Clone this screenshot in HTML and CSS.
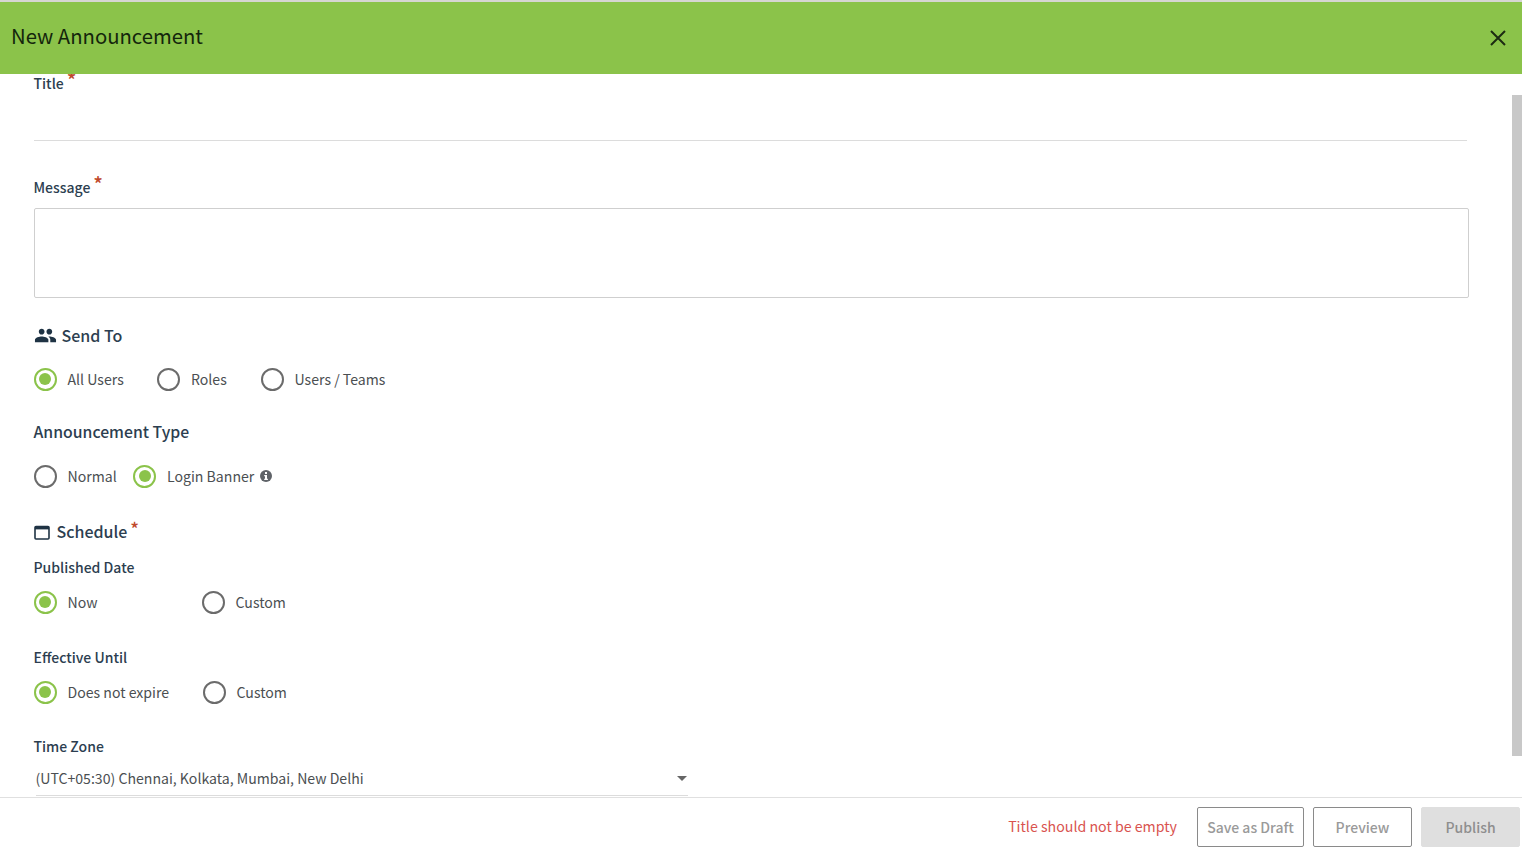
FILE: index.html
```html
<!DOCTYPE html>
<html lang="en">
<head>
<meta charset="utf-8">
<title>New Announcement</title>
<link rel="stylesheet" href="styles.css">
</head>
<body>
<div class="dialog">
  <header class="head">
    <h1 class="head-title">New Announcement</h1>
    <button class="close" aria-label="Close">
      <svg viewBox="0 0 16 16" width="16" height="16"><path d="M1 1L15 15M15 1L1 15" fill="none" stroke="#1c2b12" stroke-width="2"/></svg>
    </button>
  </header>
  <main class="body">
    <form class="form">
      <div class="label title-label">Title<span class="req">*</span></div>
      <div class="title-input"></div>
      <div class="label message-label">Message<span class="req">*</span></div>
      <div class="textarea"></div>

      <div class="section send-head">
        <svg class="ico-people" viewBox="0 0 24 24" width="24" height="24"><path fill="#1f3344" d="M16 11c1.66 0 2.99-1.34 2.99-3S17.66 5 16 5s-3 1.34-3 3 1.34 3 3 3zm-8 0c1.66 0 2.99-1.34 2.99-3S9.66 5 8 5 5 6.34 5 8s1.34 3 3 3zm0 2c-2.33 0-7 1.17-7 3.5V19h14v-2.5C15 14.17 10.33 13 8 13zm8 0c-.29 0-.62.02-.97.05 1.16.84 1.97 1.97 1.97 3.45V19h6v-2.5c0-2.33-4.67-3.5-7-3.5z"/></svg>
        <span>Send To</span>
      </div>
      <div class="radios send-radios">
        <label class="radio w-send1"><i class="dot on"></i>All Users</label>
        <label class="radio w-send2"><i class="dot"></i>Roles</label>
        <label class="radio"><i class="dot"></i>Users / Teams</label>
      </div>

      <div class="section type-head">Announcement Type</div>
      <div class="radios type-radios">
        <label class="radio w-type"><i class="dot"></i>Normal</label>
        <label class="radio"><i class="dot on"></i>Login Banner
          <svg class="ico-info" viewBox="0 0 12 12" width="12" height="12"><circle cx="6" cy="6" r="6" fill="#5f6368"/><rect x="5" y="2" width="2" height="2" fill="#fff"/><path d="M4.2 5h2.8v3.8h.9V10H4.2V8.8H5V6.2h-.8z" fill="#fff"/></svg>
        </label>
      </div>

      <div class="section sched-head">
        <svg class="ico-cal" viewBox="0 0 16 16" width="16" height="16"><rect x="1" y="2.5" width="14" height="12.5" rx="1" fill="none" stroke="#1f3344" stroke-width="1.6"/><rect x="1" y="2" width="14" height="3.4" fill="#1f3344"/></svg>
        <span>Schedule</span><span class="req req-big">*</span>
      </div>

      <div class="label pub-label">Published Date</div>
      <div class="radios pub-radios">
        <label class="radio w-pub"><i class="dot on"></i>Now</label>
        <label class="radio"><i class="dot"></i>Custom</label>
      </div>

      <div class="label eff-label">Effective Until</div>
      <div class="radios eff-radios">
        <label class="radio w-eff"><i class="dot on"></i>Does not expire</label>
        <label class="radio"><i class="dot"></i>Custom</label>
      </div>

      <div class="label tz-label">Time Zone</div>
      <div class="select">
        <span>(UTC+05:30) Chennai, Kolkata, Mumbai, New Delhi</span>
        <i class="caret"></i>
      </div>
    </form>
    <div class="scrollbar"><div class="thumb"></div></div>
  </main>
  <footer class="foot">
    <span class="error">Title should not be empty</span>
    <button class="btn btn-draft">Save as Draft</button>
    <button class="btn btn-preview">Preview</button>
    <button class="btn btn-publish">Publish</button>
  </footer>
</div>
</body>
</html>
```

FILE: styles.css
```css
* { box-sizing: border-box; }
html, body { margin: 0; height: 100%; overflow: hidden; background: #fff; }
body { font-family: "Noto Sans CJK SC", "Noto Sans", sans-serif; color: #2f3f4f; }
.dialog { display: flex; flex-direction: column; height: 850px; }

.head { flex: 0 0 74px; display: flex; align-items: center; justify-content: space-between; background: #8bc34a; border-top: 2px solid #d6d6d2; padding: 0 16px 6px 11px; }
.close { margin-top: 6px; }
.head-title { margin: 0; font-size: 20.3px; line-height: 30px; font-weight: 400; color: #14260c; }
.close { border: 0; background: none; padding: 0; width: 16px; height: 16px; display: block; }
.close svg { display: block; }

.body { flex: 1; display: flex; min-height: 0; overflow: hidden; }
.form { flex: 1; min-width: 0; padding-left: 33.5px; padding-right: 43px; }

.label { font-size: 14px; line-height: 20px; font-weight: 500; color: #2c3e50; }
.title-label, .message-label { line-height: 18px; padding-bottom: 2px; }
.req { color: #c0492b; font-size: 20px; line-height: 0; position: relative; top: -1px; margin-left: 3px; }
.title-input { height: 47px; border-bottom: 1px solid #dcdcdc; margin-right: 2px; }
.message-label { margin-top: 37px; }
.textarea { height: 90px; margin-top: 10px; border: 1px solid #cfcfcf; border-radius: 2px; }

.section { font-size: 16px; line-height: 24px; font-weight: 500; color: #2c3e50; display: flex; align-items: center; }
.send-head { margin-top: 25px; }
.ico-people { margin-right: 5px; width: 23px; height: 23px; }
.ico-cal { margin: 1px 7px 0 0; }
.req-big { margin-left: 3px; top: -3px; font-size: 18px; }

.radios { display: flex; align-items: center; font-size: 14.1px; color: #4b4f52; height: 24px; }
.radio { display: flex; align-items: center; line-height: 24px; }
.dot { width: 23px; height: 23px; border: 2px solid #6b6b6b; border-radius: 50%; margin-right: 11px; position: relative; flex: none; }
.dot.on { border-color: #8bc34a; }
.dot.on::after { content: ""; position: absolute; left: 3.5px; top: 3.5px; width: 12px; height: 12px; border-radius: 50%; background: #8bc34a; }

.send-radios { margin-top: 20px; }
.w-send1 { width: 123.5px; }
.w-send2 { width: 103.5px; }
.type-head { margin-top: 29px; font-size: 15.8px; }
.type-radios { margin-top: 20px; }
.w-type { width: 99.5px; }
.ico-info { margin-left: 6px; margin-top: 0; }
.sched-head { margin-top: 31px; }
.pub-label { margin-top: 14px; }
.pub-radios { margin-top: 13px; }
.w-pub { width: 168px; }
.eff-label { margin-top: 33px; }
.eff-radios { margin-top: 13px; }
.w-eff { width: 169px; }
.tz-label { margin-top: 32px; }
.select { width: 652px; height: 32px; margin: 8px 0 0 2px; padding: 0 1px 4px 0; border-bottom: 1px solid #dcdcdc; display: flex; align-items: center; justify-content: space-between; font-size: 14.1px; color: #4b4f52; }
.caret { width: 0; height: 0; margin-top: 2px; border-left: 5px solid transparent; border-right: 5px solid transparent; border-top: 5px solid #666; }

.scrollbar { flex: 0 0 10px; padding-top: 21px; padding-bottom: 41px; }
.thumb { height: 100%; background: #c8c8c8; }

.foot { flex: 0 0 53px; border-top: 1px solid #e0e0e0; display: flex; align-items: flex-start; justify-content: flex-end; padding: 9px 2px 0 0; }
.error { font-size: 14.2px; line-height: 40px; height: 40px; color: #d9534f; margin-right: 20px; margin-top: -1px; }
.btn { font-family: inherit; font-size: 14px; height: 40px; line-height: 38px; padding: 0; border-radius: 2px; background: #fff; border: 1px solid #8a8a8a; color: #9a9a9a; font-weight: 500; margin-left: 9px; }
.btn-draft { width: 107px; margin-left: 0; }
.btn-preview { width: 99px; }
.btn-publish { width: 99px; background: #dfdfdf; border-color: #dfdfdf; color: #8e8e8e; }
```
